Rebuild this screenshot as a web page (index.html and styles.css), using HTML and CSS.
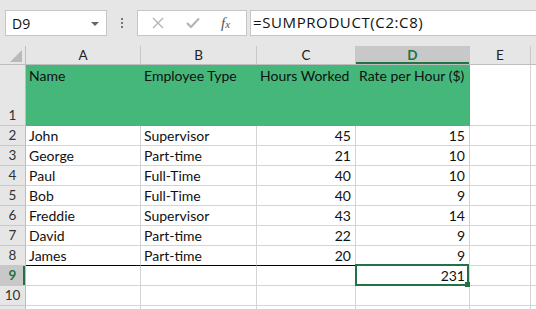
FILE: index.html
```html
<!DOCTYPE html>
<html lang="en">
<head>
    <meta charset="UTF-8">
    <title>Employee Hours</title>
    <link rel="stylesheet" href="styles.css">
</head>
<body>

    <div class="toolbar">
        <div class="name-box">
            <span class="name-text">D9</span>
            <span class="caret"></span>
        </div>
        <div class="grip"><i></i><i></i><i></i></div>
        <div class="fx-buttons">
            <svg class="btn-icon" width="12" height="12" viewBox="0 0 12 12">
                <path d="M1 1 L11 11 M11 1 L1 11" stroke="#b4b4b4" stroke-width="1.4" fill="none"/>
            </svg>
            <svg class="btn-icon" width="14" height="12" viewBox="0 0 14 12">
                <path d="M1 6 L5 10 L13 1.5" stroke="#b4b4b4" stroke-width="2.2" fill="none"/>
            </svg>
            <span class="fx">f<sub>x</sub></span>
        </div>
        <div class="formula">=SUMPRODUCT(C2:C8)</div>
    </div>

    <div class="sheet">
        <!-- column headers -->
        <div class="corner"><span class="corner-tri"></span></div>
        <div class="col-head">A</div>
        <div class="col-head">B</div>
        <div class="col-head">C</div>
        <div class="col-head active">D</div>
        <div class="col-head">E</div>
        <div class="col-head"></div>

        <!-- row 1 -->
        <div class="row-head tall">1</div>
        <div class="cell head-cell">Name</div>
        <div class="cell head-cell">Employee Type</div>
        <div class="cell head-cell">Hours Worked</div>
        <div class="cell head-cell">Rate per Hour ($)</div>
        <div class="cell"></div>
        <div class="cell"></div>

        <div class="row-head">2</div>
        <div class="cell">John</div>
        <div class="cell">Supervisor</div>
        <div class="cell num">45</div>
        <div class="cell num">15</div>
        <div class="cell"></div>
        <div class="cell"></div>

        <div class="row-head">3</div>
        <div class="cell">George</div>
        <div class="cell">Part-time</div>
        <div class="cell num">21</div>
        <div class="cell num">10</div>
        <div class="cell"></div>
        <div class="cell"></div>

        <div class="row-head">4</div>
        <div class="cell">Paul</div>
        <div class="cell">Full-Time</div>
        <div class="cell num">40</div>
        <div class="cell num">10</div>
        <div class="cell"></div>
        <div class="cell"></div>

        <div class="row-head">5</div>
        <div class="cell">Bob</div>
        <div class="cell">Full-Time</div>
        <div class="cell num">40</div>
        <div class="cell num">9</div>
        <div class="cell"></div>
        <div class="cell"></div>

        <div class="row-head">6</div>
        <div class="cell">Freddie</div>
        <div class="cell">Supervisor</div>
        <div class="cell num">43</div>
        <div class="cell num">14</div>
        <div class="cell"></div>
        <div class="cell"></div>

        <div class="row-head">7</div>
        <div class="cell">David</div>
        <div class="cell">Part-time</div>
        <div class="cell num">22</div>
        <div class="cell num">9</div>
        <div class="cell"></div>
        <div class="cell"></div>

        <div class="row-head">8</div>
        <div class="cell total-top">James</div>
        <div class="cell total-top">Part-time</div>
        <div class="cell num total-top">20</div>
        <div class="cell num">9</div>
        <div class="cell"></div>
        <div class="cell"></div>

        <div class="row-head active">9</div>
        <div class="cell"></div>
        <div class="cell"></div>
        <div class="cell"></div>
        <div class="cell num selected">231<span class="fill-handle"></span></div>
        <div class="cell"></div>
        <div class="cell"></div>

        <div class="row-head">10</div>
        <div class="cell"></div>
        <div class="cell"></div>
        <div class="cell"></div>
        <div class="cell"></div>
        <div class="cell"></div>
        <div class="cell"></div>

        <!-- row 11, only its top edge shows -->
        <div class="row-head"></div>
        <div class="cell"></div>
        <div class="cell"></div>
        <div class="cell"></div>
        <div class="cell"></div>
        <div class="cell"></div>
        <div class="cell"></div>
    </div>

</body>
</html>
```

FILE: styles.css
```css
body {
    margin: 0;
    padding: 0;
    width: 536px;
    height: 309px;
    overflow: hidden;
    background-color: #ffffff;
    font-family: "Lato", "Open Sans", sans-serif;
    color: #111;
}

/* formula bar area */

.toolbar {
    display: flex;
    align-items: flex-start;
    height: 46px;
    padding: 10px 0 0 5px;
    box-sizing: border-box;
    background-color: #e6e6e6;
}

.name-box {
    display: flex;
    align-items: center;
    justify-content: space-between;
    width: 102px;
    height: 26px;
    box-sizing: border-box;
    padding: 0 7px 0 6px;
    background: white;
    border: 1px solid #c6c6c6;
    font-family: "Open Sans", sans-serif;
    font-size: 14px;
}

.caret {
    width: 0;
    height: 0;
    border-left: 4px solid transparent;
    border-right: 4px solid transparent;
    border-top: 4px solid #666;
    margin-top: 1px;
}

.grip {
    display: flex;
    flex-direction: column;
    gap: 2px;
    width: 30px;
    height: 26px;
    align-items: center;
    justify-content: center;
}

.grip i {
    display: block;
    width: 2px;
    height: 2px;
    background-color: #777;
}

.fx-buttons {
    display: flex;
    align-items: center;
    width: 110px;
    height: 26px;
    box-sizing: border-box;
    padding: 0 0 0 14px;
    gap: 22px;
    background: white;
    border: 1px solid #c6c6c6;
}

.fx {
    font-family: "Liberation Serif", serif;
    font-style: italic;
    font-size: 15px;
    color: #555;
    margin-left: -1px;
}

.fx sub {
    font-size: 11px;
    vertical-align: 0;
}

.formula {
    flex: 1;
    height: 26px;
    box-sizing: border-box;
    margin-left: 3px;
    margin-right: -2px;
    padding: 1px 0 0 2px;
    background: white;
    border: 1px solid #c6c6c6;
    font-family: "Open Sans", sans-serif;
    font-size: 15px;
    letter-spacing: 0.6px;
}

/* worksheet grid */

.sheet {
    display: grid;
    grid-template-columns: 26px 115px 116px 99px 114px 61px 1fr;
    grid-template-rows: 19px 61px repeat(10, 20px);
    font-size: 14px;
}

.corner {
    position: relative;
    background-color: #e6e6e6;
    border-right: 1px solid #bdbdbd;
    border-bottom: 1px solid #bdbdbd;
}

.corner-tri {
    position: absolute;
    right: 3px;
    bottom: 2px;
    width: 0;
    height: 0;
    border-left: 12px solid transparent;
    border-bottom: 12px solid #b9b9b9;
}

.col-head {
    display: flex;
    align-items: center;
    justify-content: center;
    background-color: #e6e6e6;
    border-right: 1px solid #c8c8c8;
    border-bottom: 1px solid #bdbdbd;
    font-size: 13.5px;
    color: #222;
}

.col-head.active {
    background-color: #c8c8c8;
    color: #217346;
    font-weight: bold;
    box-shadow: inset 0 -2px 0 #217346;
}

.row-head {
    display: flex;
    align-items: flex-end;
    justify-content: center;
    padding-bottom: 1px;
    background-color: #e6e6e6;
    border-right: 1px solid #bdbdbd;
    border-bottom: 1px solid #c8c8c8;
    box-sizing: border-box;
    font-size: 13.5px;
    line-height: 18px;
    color: #333;
}

.row-head.active {
    background-color: #c8c8c8;
    color: #217346;
    font-weight: bold;
    box-shadow: inset -2px 0 0 #217346;
}

.cell {
    position: relative;
    box-sizing: border-box;
    padding: 0 3px;
    border-right: 1px solid #d4d4d4;
    border-bottom: 1px solid #d4d4d4;
    line-height: 20px;
    white-space: nowrap;
    overflow: visible;
}

.head-cell {
    background-color: #45b77a;
    border-right-color: #45b77a;
    border-bottom-color: #45b77a;
    line-height: 19px;
    padding-top: 1px;
}

.num {
    text-align: right;
    padding-right: 4px;
}

.total-top {
    border-bottom-color: #000;
}

.selected::after {
    content: "";
    position: absolute;
    top: -2px;
    left: -1px;
    right: 0;
    bottom: -1px;
    border: 2px solid #217346;
    pointer-events: none;
}

.fill-handle {
    position: absolute;
    right: -1px;
    bottom: -2px;
    width: 5px;
    height: 5px;
    background-color: #217346;
    z-index: 1;
}
```
